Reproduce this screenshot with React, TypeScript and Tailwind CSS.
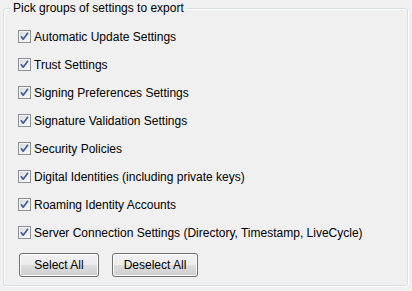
const groups = [
  "Automatic Update Settings",
  "Trust Settings",
  "Signing Preferences Settings",
  "Signature Validation Settings",
  "Security Policies",
  "Digital Identities (including private keys)",
  "Roaming Identity Accounts",
  "Server Connection Settings (Directory, Timestamp, LiveCycle)",
];

function CheckBox() {
  return (
    <svg width="13" height="13" viewBox="0 0 13 13" className="shrink-0">
      <defs>
        <linearGradient id="cbfill" x1="0" y1="0" x2="1" y2="1">
          <stop offset="0" stopColor="#dcdcdc" />
          <stop offset="1" stopColor="#fbfbfb" />
        </linearGradient>
      </defs>
      <rect x="0.5" y="0.5" width="12" height="12" fill="#f4f4f4" stroke="#8e8f8f" />
      <rect x="2" y="2" width="9" height="9" fill="url(#cbfill)" />
      <path
        d="M3 6.2 L5.2 9.2 L10 2.8"
        fill="none"
        stroke="#3d5ca8"
        strokeWidth="1.7"
        strokeLinejoin="round"
      />
    </svg>
  );
}

function Button({ label, width }: { label: string; width: string }) {
  return (
    <button
      className={`${width} h-[24px] rounded-[3px] border border-[#707070] bg-[linear-gradient(to_bottom,#f2f2f2_0%,#ebebeb_50%,#dddddd_50%,#cfcfcf_100%)] shadow-[inset_0_0_0_1px_#fcfcfc] text-[12px] leading-[14px] text-black`}
    >
      {label}
    </button>
  );
}

export default function App() {
  return (
    <div className="w-[412px] h-[291px] bg-[#f0f0f0] pl-[3px] pt-[8px] font-['Liberation_Sans',Arial,sans-serif] text-[12px] text-black">
      <div className="relative w-[405px] h-[278px] rounded-[3px] border border-[#d5dfe5] shadow-[1px_1px_0_#ffffff,inset_1px_1px_0_#ffffff] pl-[14px] pt-[21px]">
        <span className="absolute left-[7px] top-[-8px] bg-[#f0f0f0] px-[2px] leading-[14px]">
          Pick groups of settings to export
        </span>
        <div className="flex flex-col gap-[15px]">
          {groups.map((g) => (
            <label key={g} className="flex h-[13px] items-center gap-[3px] leading-[14px]">
              <CheckBox />
              <span>{g}</span>
            </label>
          ))}
        </div>
        <div className="mt-[14px] ml-[1px] flex gap-[13px]">
          <Button label="Select All" width="w-[80px]" />
          <Button label="Deselect All" width="w-[86px]" />
        </div>
      </div>
    </div>
  );
}
